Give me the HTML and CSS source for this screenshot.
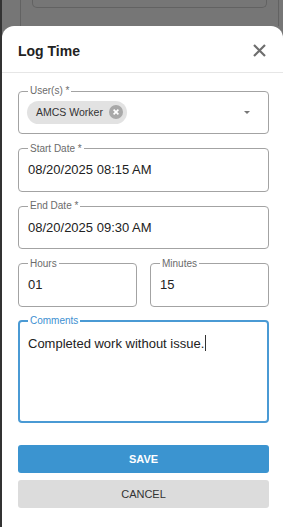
FILE: index.html
```html
<!DOCTYPE html>
<html lang="en">
<head>
  <meta charset="UTF-8" />
  <title>Log Time</title>
  <meta name="viewport" content="width=device-width, initial-scale=1.0" />
  <link rel="stylesheet" href="styles.css">
</head>
<body>

  <div class="screen">
    <!-- Dimmed page behind the sheet -->
    <div class="backdrop">
      <div class="backdrop-card">
        <div class="backdrop-box"></div>
      </div>
    </div>

    <!-- Bottom sheet -->
    <div class="sheet">
      <div class="sheet-header">
        <h2>Log Time</h2>
        <svg class="close-icon" width="13" height="13" viewBox="0 0 13 13">
          <path d="M1 1 L12 12 M12 1 L1 12" stroke="#6e6e6e" stroke-width="2.2" fill="none" />
        </svg>
      </div>

      <form class="log-form">
        <fieldset class="field">
          <legend>User(s) *</legend>
          <div class="field-value">
            <span class="chip">
              AMCS Worker
              <svg class="chip-delete" width="14" height="14" viewBox="0 0 14 14">
                <circle cx="7" cy="7" r="7" fill="#a8a8a8" />
                <path d="M4.6 4.6 L9.4 9.4 M9.4 4.6 L4.6 9.4" stroke="#fff" stroke-width="1.6" />
              </svg>
            </span>
            <span class="select-arrow"></span>
          </div>
        </fieldset>

        <fieldset class="field">
          <legend>Start Date *</legend>
          <div class="field-value">08/20/2025 08:15 AM</div>
        </fieldset>

        <fieldset class="field">
          <legend>End Date *</legend>
          <div class="field-value">08/20/2025 09:30 AM</div>
        </fieldset>

        <div class="field-row">
          <fieldset class="field">
            <legend>Hours</legend>
            <div class="field-value">01</div>
          </fieldset>
          <fieldset class="field">
            <legend>Minutes</legend>
            <div class="field-value">15</div>
          </fieldset>
        </div>

        <fieldset class="field field-focused">
          <legend>Comments</legend>
          <div class="comment-value">Completed work without issue.<span class="caret"></span></div>
        </fieldset>

        <div class="actions">
          <button type="button" class="btn btn-save">SAVE</button>
          <button type="button" class="btn btn-cancel">CANCEL</button>
        </div>
      </form>
    </div>
  </div>

</body>
</html>
```

FILE: styles.css
```css
* {
  box-sizing: border-box;
  margin: 0;
  padding: 0;
  font-family: "Liberation Sans", Arial, sans-serif;
}

body {
  background: #767676;
}

.screen {
  min-height: 100vh;
  display: flex;
  flex-direction: column;
  border-left: 2px solid #333333;
}

.backdrop {
  height: 26px;
  padding: 0 4px 0 18px;
}

.backdrop-card {
  height: 100%;
  border-left: 1px solid #626262;
  border-right: 1px solid #626262;
  padding: 0 11px;
}

.backdrop-box {
  height: 8px;
  border: 1px solid #626262;
  border-top: none;
  border-radius: 0 0 5px 5px;
}

.sheet {
  flex: 1;
  background: #ffffff;
  border-radius: 12px 12px 0 0;
}

.sheet-header {
  height: 47px;
  padding: 0 17px 0 16px;
  display: flex;
  align-items: center;
  justify-content: space-between;
  border-bottom: 1px solid #e6e6e6;
}

.sheet-header h2 {
  font-size: 14px;
  font-weight: bold;
  color: #222222;
  padding-top: 4px;
}

.close-icon {
  margin-top: 2px;
}

.log-form {
  padding: 12px 14px 0 16px;
  display: flex;
  flex-direction: column;
  gap: 8.5px;
}

.field {
  border: 1px solid #a3a3a3;
  border-radius: 4px;
  padding: 0 9px 6px;
  min-width: 0;
}

.field legend {
  font-size: 10px;
  line-height: 12px;
  color: #6b6b6b;
  padding: 0 2px;
}

.field-value {
  height: 30px;
  display: flex;
  align-items: center;
  font-size: 13px;
  color: #222222;
}

.chip {
  display: inline-flex;
  align-items: center;
  height: 23px;
  margin-left: -1px;
  padding: 0 4px 0 9px;
  gap: 6px;
  border-radius: 12px;
  background: #e2e2e2;
  font-size: 10.5px;
  color: #333333;
}

.select-arrow {
  margin-left: auto;
  margin-right: 9px;
  width: 0;
  height: 0;
  border-left: 3.5px solid transparent;
  border-right: 3.5px solid transparent;
  border-top: 3.5px solid #777777;
}

.field-row {
  display: grid;
  grid-template-columns: 1fr 1fr;
  gap: 13px;
}

.field-focused {
  border: 2px solid #4a9ad4;
  padding: 0 8px;
}

.field-focused legend {
  color: #3d8fd1;
}

.comment-value {
  height: 94px;
  padding-top: 8px;
  font-size: 13px;
  line-height: 16px;
  color: #222222;
}

.caret {
  display: inline-block;
  width: 1px;
  height: 16px;
  margin-left: 1px;
  background: #333333;
  vertical-align: -3px;
}

.actions {
  display: flex;
  flex-direction: column;
  gap: 7px;
  margin-top: 13px;
}

.btn {
  height: 28px;
  border: none;
  border-radius: 3px;
  font-size: 11px;
}

.btn-save {
  background: #3b94d0;
  color: #ffffff;
  font-weight: bold;
}

.btn-cancel {
  background: #dcdcdc;
  color: #333333;
}
```
